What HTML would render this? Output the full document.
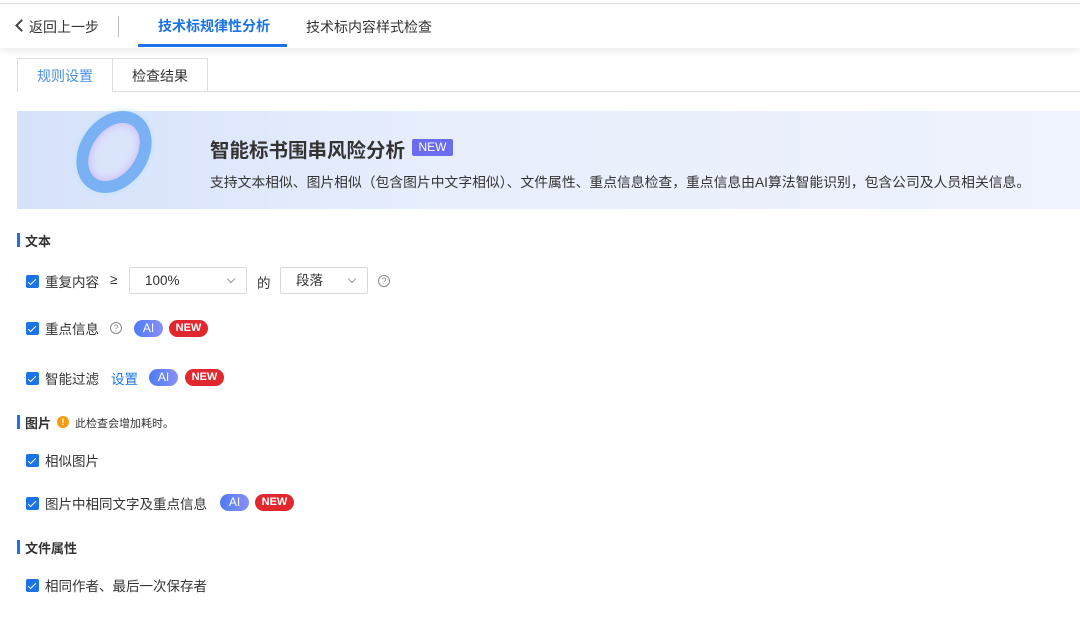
<!DOCTYPE html><html><head><meta charset="utf-8"><style>
*{margin:0;padding:0;box-sizing:border-box}
body{width:1080px;height:643px;background:#fff;font-family:"Liberation Sans","Noto Sans CJK SC",sans-serif;color:#333;position:relative;overflow:hidden;font-size:13.5px}
.a{position:absolute;white-space:nowrap}
.hdr{position:absolute;left:0;top:3px;width:1080px;height:45px;border-top:1px solid #ddd;box-shadow:0 3px 6px rgba(0,0,0,.08);background:#fff}
.cb{position:absolute;width:13px;height:13px;background:#1a73e8;border-radius:2px}
.cb:after{content:"";position:absolute;left:4px;top:1.5px;width:3px;height:7px;border:solid #fff;border-width:0 1.6px 1.6px 0;transform:rotate(45deg)}
.sec{position:absolute;left:17px;width:3px;height:14px;background:#1a73e8}
.ai{position:absolute;height:17px;width:29px;border-radius:9px;background:linear-gradient(90deg,#4d7cf5,#8a8ff7);color:#fff;font-size:12px;text-align:center;line-height:17px}
.new{position:absolute;height:17px;width:39px;border-radius:9px;background:#e0282e;color:#fff;font-size:11px;font-weight:bold;text-align:center;line-height:17px}
.q{position:absolute;width:12px;height:12px;border:1px solid #888;border-radius:50%;font-size:9px;color:#888;text-align:center;line-height:10px}
.sel{position:absolute;height:27px;border:1px solid #d9d9d9;border-radius:2px;font-size:13.5px;line-height:25px;padding-left:15px}
.sel i{position:absolute;right:12px;top:8px;width:6px;height:6px;border:solid #999;border-width:0 1px 1px 0;transform:rotate(45deg)}
</style></head><body>
<div class="hdr"></div>
<div class="a" style="left:17px;top:21px;width:9px;height:9px;border:solid #444;border-width:0 0 2px 2px;transform:rotate(45deg)"></div>
<div class="a" style="left:29px;top:17px;font-size:14px;color:#333">返回上一步</div>
<div class="a" style="left:118px;top:16px;width:1px;height:21px;background:#bbb"></div>
<div class="a" style="left:158px;top:16px;font-size:14px;color:#1a73e8;font-weight:bold">技术标规律性分析</div>
<div class="a" style="left:138px;top:44px;width:149px;height:3px;background:#1a73e8"></div>
<div class="a" style="left:306px;top:17px;font-size:14px;color:#333">技术标内容样式检查</div>
<div class="a" style="left:17px;top:91px;width:1063px;height:1px;background:#ddd"></div>
<div class="a" style="left:17px;top:58px;width:96px;height:34px;border:1px solid #ddd;border-bottom:none;background:#fff"></div>
<div class="a" style="left:112px;top:58px;width:96px;height:34px;border:1px solid #ddd;background:#fff"></div>
<div class="a" style="left:37px;top:66px;font-size:14px;color:#4a90e2">规则设置</div>
<div class="a" style="left:132px;top:66px;font-size:14px;color:#333">检查结果</div>
<div class="a" style="left:17px;top:111px;width:1063px;height:98px;background:linear-gradient(90deg,#d6e2fb,#e8eefc 40%,#eef3fd)"></div>
<div class="a" style="left:80px;top:108px;width:68px;height:88px;border-radius:50%;border:12px solid #6aa8f3;transform:rotate(35deg);box-shadow:inset 0 0 10px #c9a8f5,0 0 8px #b7e3f8;opacity:.85"></div>
<div class="a" style="left:210px;top:134px;font-size:19.5px;font-weight:bold;color:#333">智能标书围串风险分析</div>
<div class="a" style="left:412px;top:139px;width:41px;height:17px;background:#6b6cf0;border-radius:2px;color:#fff;font-size:12px;text-align:center;line-height:17px">NEW</div>
<div class="a" style="left:210px;top:171px;font-size:13.8px;color:#333">支持文本相似、图片相似（包含图片中文字相似）、文件属性、重点信息检查，重点信息由AI算法智能识别，包含公司及人员相关信息。</div>

<div class="sec" style="top:233px"></div><div class="a" style="left:25px;top:231px;font-weight:bold;font-size:13px">文本</div>
<div class="cb" style="left:26px;top:275px"></div><div class="a" style="left:45px;top:271px">重复内容</div>
<div class="a" style="left:110px;top:272px">≥</div>
<div class="sel" style="left:129px;top:267px;width:118px">100%<i></i></div>
<div class="a" style="left:257px;top:272px">的</div>
<div class="sel" style="left:280px;top:267px;width:88px">段落<i></i></div>
<div class="q" style="left:378px;top:275px">?</div>
<div class="cb" style="left:26px;top:322px"></div><div class="a" style="left:45px;top:318px">重点信息</div>
<div class="q" style="left:110px;top:322px">?</div>
<div class="ai" style="left:134px;top:320px">AI</div><div class="new" style="left:169px;top:320px">NEW</div>
<div class="cb" style="left:26px;top:372px"></div><div class="a" style="left:45px;top:368px">智能过滤</div>
<div class="a" style="left:111px;top:368px;color:#1a73e8">设置</div>
<div class="ai" style="left:149px;top:369px">AI</div><div class="new" style="left:185px;top:369px">NEW</div>

<div class="sec" style="top:415px"></div><div class="a" style="left:25px;top:413px;font-weight:bold;font-size:13px">图片</div>
<div class="a" style="left:57px;top:416px;width:12px;height:12px;border-radius:50%;background:#f39c12;color:#fff;font-size:9px;text-align:center;line-height:12px;font-weight:bold">!</div>
<div class="a" style="left:75px;top:415px;font-size:11px;color:#333">此检查会增加耗时。</div>
<div class="cb" style="left:26px;top:454px"></div><div class="a" style="left:45px;top:450px">相似图片</div>
<div class="cb" style="left:26px;top:497px"></div><div class="a" style="left:45px;top:493px">图片中相同文字及重点信息</div>
<div class="ai" style="left:220px;top:494px">AI</div><div class="new" style="left:255px;top:494px">NEW</div>

<div class="sec" style="top:540px"></div><div class="a" style="left:25px;top:538px;font-weight:bold;font-size:13px">文件属性</div>
<div class="cb" style="left:26px;top:579px"></div><div class="a" style="left:45px;top:575px">相同作者、最后一次保存者</div>
</body></html>
